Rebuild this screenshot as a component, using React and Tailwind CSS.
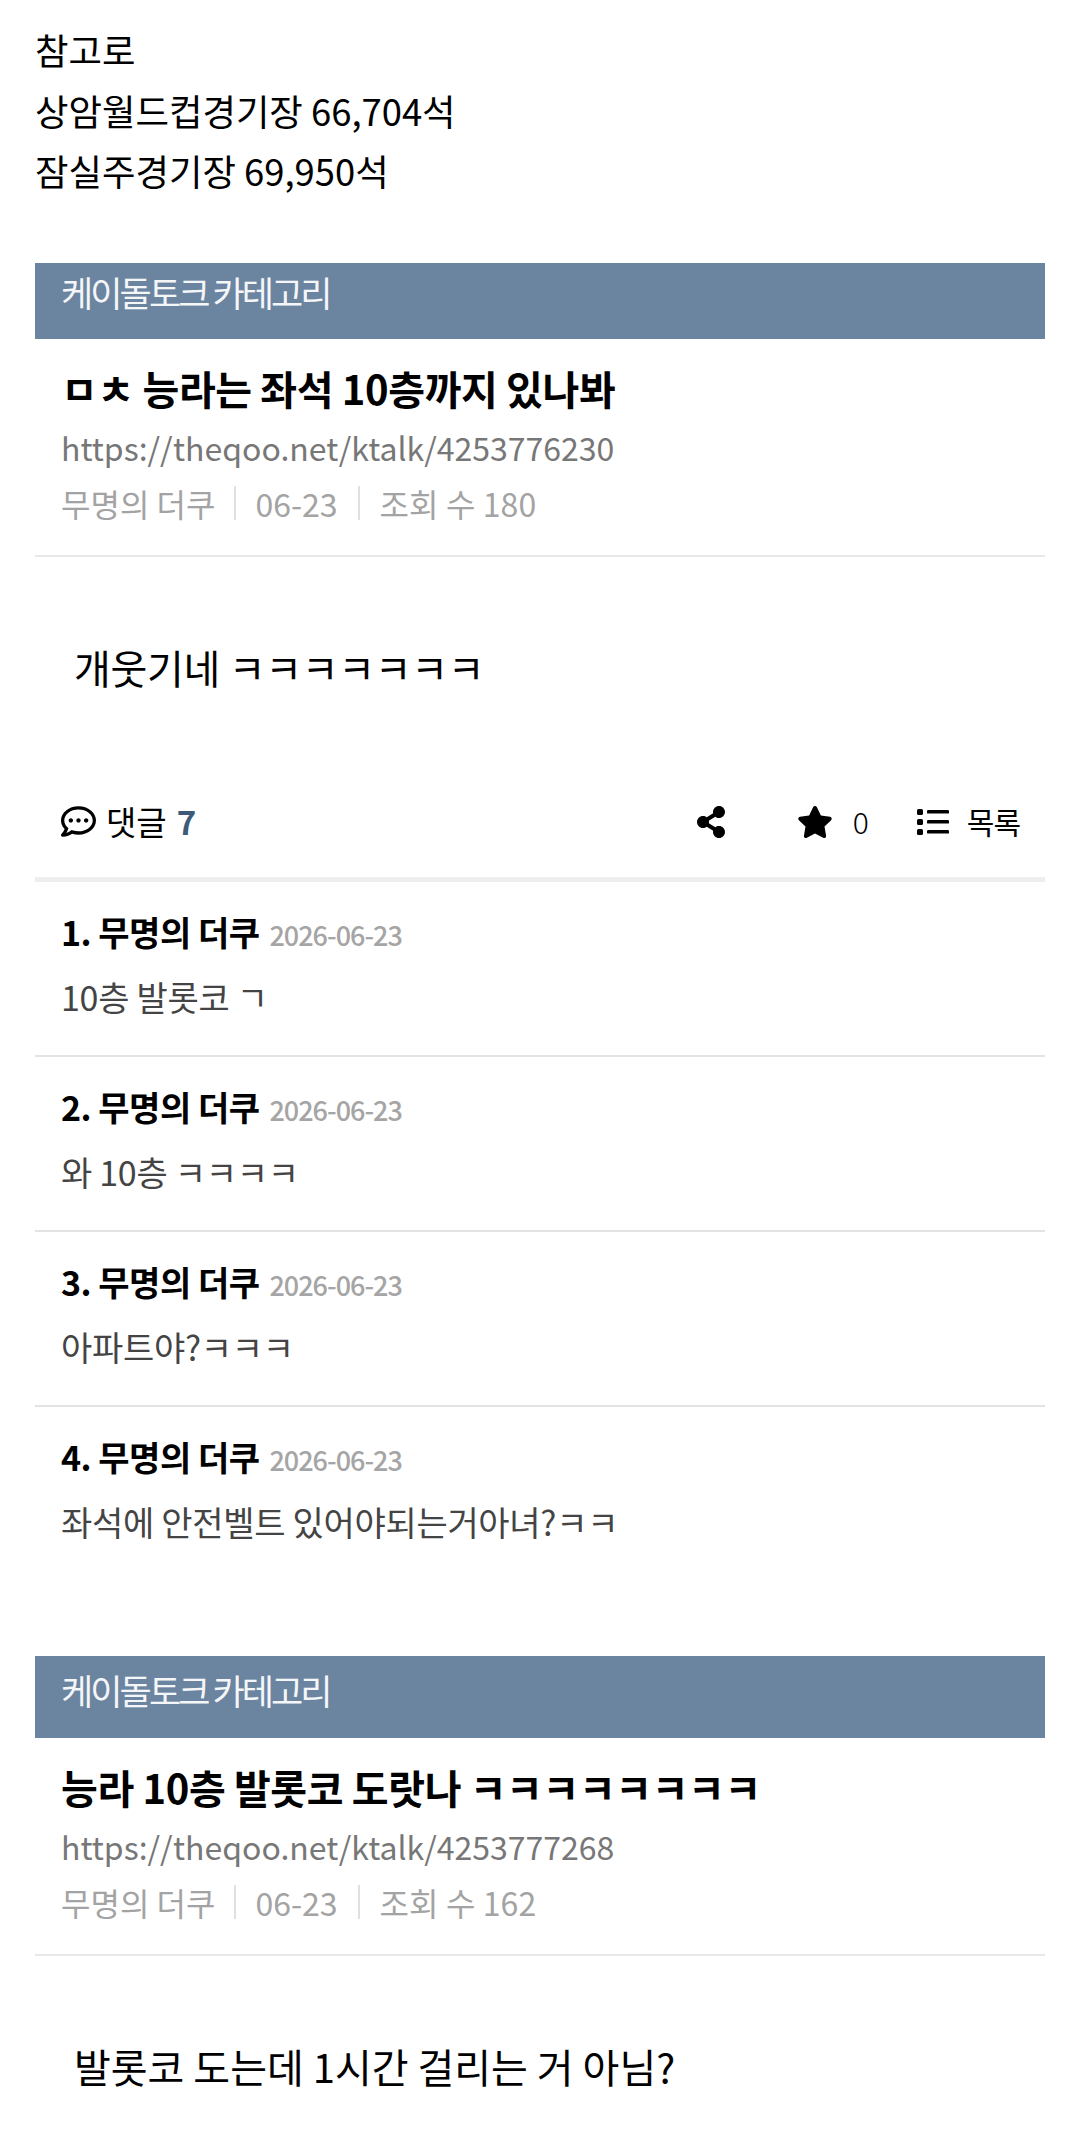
import { FaRegCommentDots, FaShareAlt, FaStar } from 'react-icons/fa'

const comments = [
  { no: 1, text: '10층 발롯코 ㄱ' },
  { no: 2, text: '와 10층 ㅋㅋㅋㅋ' },
  { no: 3, text: '아파트야?ㅋㅋㅋ' },
  { no: 4, text: '좌석에 안전벨트 있어야되는거아녀?ㅋㅋ' },
]

function ListIcon() {
  return (
    <svg viewBox="0 0 32 26" className="ml-[48px] h-[26px] w-[32px]" fill="currentColor">
      <rect x="0" y="0" width="6" height="6" rx="1.5" />
      <rect x="0" y="10" width="6" height="6" rx="1.5" />
      <rect x="0" y="20" width="6" height="6" rx="1.5" />
      <rect x="10" y="1" width="22" height="3.6" rx="1.2" />
      <rect x="10" y="11" width="22" height="3.6" rx="1.2" />
      <rect x="10" y="21" width="22" height="3.6" rx="1.2" />
    </svg>
  )
}

function ArticleHead({ category, title, url, views, barClass }) {
  return (
    <div>
      <div className={`bg-[#6b84a0] px-[26px] text-[35px] leading-[42px] tracking-[-2.9px] text-[#f4f6f8] ${barClass}`}>{category}</div>
      <div className="border-b-2 border-[#e8e8e8] px-[26px] pt-[23px] pb-[29px]">
        <h2 className="text-[40px] font-bold leading-[52px] tracking-[-0.4px] text-black">{title}</h2>
        <div className="mt-[8px] text-[32px] leading-[50px] text-[#777]">{url}</div>
        <div className="mt-[8px] flex items-center text-[32px] leading-[46px] text-[#a3a3a3]">
          <span>무명의 더쿠</span>
          <span className="mx-[19px] h-[34px] w-[2px] bg-[#e0e0e0]"></span>
          <span>06-23</span>
          <span className="mx-[20px] h-[34px] w-[2px] bg-[#e0e0e0]"></span>
          <span className="tracking-[0.1px]">조회 수 {views}</span>
        </div>
      </div>
    </div>
  )
}

export default function App() {
  return (
    <div className="h-[2136px] overflow-hidden bg-white px-[35px] font-['Noto_Sans_CJK_KR','Noto_Sans',sans-serif] text-black">
      <div className="pt-[19px] text-[36.4px] leading-[60.5px]">
        <p>참고로</p>
        <p>상암월드컵경기장 66,704석</p>
        <p>잠실주경기장 69,950석</p>
      </div>

      <div className="mt-[62px]">
        <ArticleHead
          category="케이돌토크 카테고리"
          title="ㅁㅊ 능라는 좌석 10층까지 있나봐"
          url="https://theqoo.net/ktalk/4253776230"
          views="180"
          barClass="h-[76px] pt-[8px]"
        />
      </div>

      <p className="mt-[85px] pl-[39px] text-[40px] leading-[50px] tracking-[-0.3px]">개웃기네 ㅋㅋㅋㅋㅋㅋㅋ</p>

      <div className="mt-[98px] flex h-[64px] items-center pl-[26px] pr-[25px] text-[33px]">
        <FaRegCommentDots className="h-[35px] w-[35px]" />
        <span className="ml-[10px]">댓글</span>
        <span className="ml-[10px] font-bold text-[#3d5a78]">7</span>
        <FaShareAlt className="ml-auto mr-[3px] h-[32px] w-[32px]" />
        <FaStar className="ml-[67px] h-[34px] w-[36px]" />
        <span className="ml-[20px] text-[30px] font-light">0</span>
        <ListIcon />
        <span className="ml-[18px] text-[30px] tracking-[-1px]">목록</span>
      </div>

      <div className="mt-[23px] border-t-[5px] border-[#eeeeee]">
        {comments.map((c, i) => (
          <div key={c.no} className={`h-[175.3px] px-[26px] pt-[25px] ${i < 3 ? 'border-b-2 border-[#e3e3e3]' : ''}`}>
            <div className="flex items-baseline leading-[50px]">
              <span className="text-[34px] font-bold tracking-[-0.5px]">{c.no}. 무명의 더쿠</span>
              <span className="ml-[10px] text-[27px] font-medium tracking-[-1px] text-[#a5a5a5]">2026-06-23</span>
            </div>
            <p className="mt-[12px] text-[34px] leading-[50px] tracking-[-0.3px] text-[#444]">{c.text}</p>
          </div>
        ))}
      </div>

      <div className="mt-[73px]">
        <ArticleHead
          category="케이돌토크 카테고리"
          title="능라 10층 발롯코 도랏나 ㅋㅋㅋㅋㅋㅋㅋㅋ"
          url="https://theqoo.net/ktalk/4253777268"
          views="162"
          barClass="h-[82px] pt-[13px]"
        />
      </div>

      <p className="mt-[85px] pl-[39px] text-[40px] leading-[50px]">발롯코 도는데 1시간 걸리는 거 아님?</p>
    </div>
  )
}
